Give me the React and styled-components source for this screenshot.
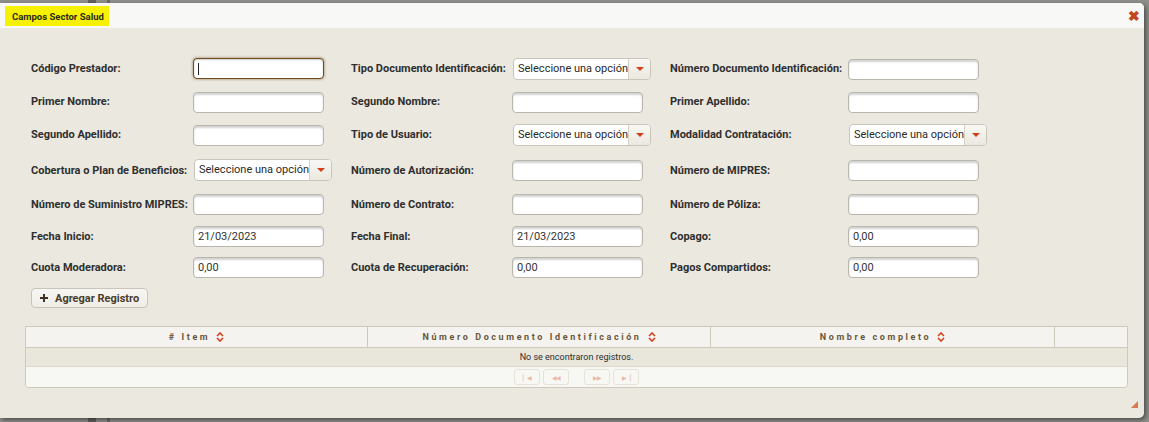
import React from "react";
import styled, { createGlobalStyle } from "styled-components";

const GlobalStyle = createGlobalStyle`
  html, body {
    margin: 0;
    padding: 0;
    background: #8a8a86;
    font-family: Roboto, "Liberation Sans", Arial, sans-serif;
  }
`;

const Backdrop = styled.div`
  width: 1149px;
  height: 422px;
  overflow: hidden;
  background: linear-gradient(90deg, #8d8d89 0, #8d8d89 88px, #5f5f5c 88px, #5f5f5c 96px, #8d8d89 96px, #8d8d89 107px, #6a6a66 107px, #6a6a66 110px, #8d8d89 110px);
  padding-top: 3px;
  box-sizing: border-box;
`;

const Dialog = styled.div`
  width: 1144px;
  height: 415px;
  background: #ebe8df;
  border-radius: 0 5px 5px 0;
  box-shadow: 2px 2px 4px rgba(0, 0, 0, 0.45);
  display: flex;
  flex-direction: column;
  position: relative;
`;

const TitleBar = styled.div`
  height: 25px;
  background: #f8f8f6;
  border-radius: 0 5px 0 0;
  display: flex;
  align-items: center;
  justify-content: space-between;
  padding: 0 4px 0 5px;
`;

const Title = styled.span`
  background: #f5f100;
  color: #2d2a1c;
  font-size: 9.5px;
  font-weight: 700;
  padding: 5px 5px 4px 7px;
  margin-top: 1px;
`;

const Close = styled.span`
  color: #c2461b;
  font-size: 14px;
  font-weight: 900;
  line-height: 1;
  margin-top: 1px;
`;

const Body = styled.div`
  padding: 24px 0 0 31px;
  display: flex;
  flex-direction: column;
`;

const FormGrid = styled.div`
  display: grid;
  grid-template-columns: 162px 158px 161px 158px 178px 1fr;
  grid-template-rows: 33px 33px 33px 38px 30px 34px 28px;
  align-items: center;
`;

const Label = styled.label`
  font-size: 11px;
  font-weight: 700;
  color: #2f2f2f;
`;

const Input = styled.input`
  width: 131px;
  height: 21px;
  box-sizing: border-box;
  border: 1px solid #b9b6ad;
  border-radius: 4px;
  background: #fff;
  box-shadow: inset 0 2px 2px rgba(0, 0, 0, 0.18);
  font-family: Roboto, "Liberation Sans", Arial, sans-serif;
  font-size: 11px;
  color: #333;
  padding: 0 4px;
  outline: none;
`;

const Caret = styled.span`
  display: inline-block;
  width: 1px;
  height: 12px;
  background: #222;
`;

const FocusInput = styled.div`
  width: 131px;
  height: 21px;
  box-sizing: border-box;
  border: 1px solid #6e4c1f;
  border-radius: 4px;
  background: #fff;
  box-shadow: 0 0 3px rgba(110, 76, 31, 0.7), inset 0 1px 2px rgba(0, 0, 0, 0.2);
  display: flex;
  align-items: center;
  padding-left: 4px;
`;

const Select = styled.div`
  width: 138px;
  height: 22px;
  box-sizing: border-box;
  border: 1px solid #c9c5bb;
  border-radius: 4px;
  background: #fff;
  display: flex;
  margin-left: 1px;
  overflow: hidden;
`;

const SelectText = styled.span`
  flex: 1;
  font-size: 11px;
  color: #2a2a2a;
  padding-left: 4px;
  line-height: 19px;
  white-space: nowrap;
`;

const SelectBtn = styled.span`
  width: 21px;
  flex-shrink: 0;
  border-left: 1px solid #d6d2c8;
  background: linear-gradient(#f8f7f3, #ebe8e0);
  display: flex;
  align-items: center;
  justify-content: center;
  &::after {
    content: "";
    border-left: 4px solid transparent;
    border-right: 4px solid transparent;
    border-top: 4px solid #d2401a;
  }
`;

const AddButton = styled.button`
  align-self: flex-start;
  margin-top: 7px;
  height: 20px;
  width: 117px;
  border: 1px solid #c9c5ba;
  border-radius: 4px;
  background: linear-gradient(#f7f6f2, #efede6);
  font-family: Roboto, "Liberation Sans", Arial, sans-serif;
  font-size: 11px;
  font-weight: 700;
  color: #4a3d2a;
  display: flex;
  align-items: center;
  gap: 7px;
  padding: 0 0 0 8px;
`;

const Table = styled.div`
  margin: 18px 0 0 -6px;
  width: 1101px;
  border: 1px solid #cdc9bd;
  border-radius: 0 0 4px 4px;
  overflow: hidden;
`;

const HeadRow = styled.div`
  display: grid;
  grid-template-columns: 342px 343px 344px 1fr;
  height: 20px;
  background: #f4f3f0;
  border-bottom: 1px solid #cdc9bd;
`;

const HeadCell = styled.div`
  border-right: ${(p) => (p.$last ? "none" : "1px solid #cdc9bd")};
  display: flex;
  align-items: center;
  justify-content: center;
  gap: 6px;
  font-size: 9px;
  font-weight: 700;
  letter-spacing: 2.6px;
  color: #6a573a;
`;

const Sort = styled.svg`
  width: 8px;
  height: 10px;
`;

const EmptyRow = styled.div`
  height: 18px;
  background: #e9e6dc;
  border-bottom: 1px solid #dcd8cc;
  font-size: 9px;
  color: #2e2e2e;
  display: flex;
  align-items: center;
  justify-content: center;
`;

const Pager = styled.div`
  height: 20px;
  background: #f7f7f4;
  display: flex;
  align-items: center;
  justify-content: center;
  gap: 3px;
`;

const PageBtn = styled.span`
  width: 26px;
  height: 16px;
  box-sizing: border-box;
  border: 1px solid #e8e3d8;
  border-radius: 3px;
  margin-left: ${(p) => (p.$gap ? "12px" : "0")};
  display: flex;
  align-items: center;
  justify-content: center;
  color: #eab9a6;
  font-size: 6px;
  letter-spacing: -1px;
`;

const Resize = styled.svg`
  position: absolute;
  right: 6px;
  bottom: 10px;
  width: 7px;
  height: 7px;
`;

const SortIcon = () => (
  <Sort viewBox="0 0 8 10">
    <path d="M1 4 L4 1 L7 4" fill="none" stroke="#d2401a" strokeWidth="1.6" />
    <path d="M1 6 L4 9 L7 6" fill="none" stroke="#d2401a" strokeWidth="1.6" />
  </Sort>
);

const Sel = () => (
  <Select>
    <SelectText>Seleccione una opción</SelectText>
    <SelectBtn />
  </Select>
);

const rows = [
  [
    ["Código Prestador:", "focus"],
    ["Tipo Documento Identificación:", "select"],
    ["Número Documento Identificación:", ""],
  ],
  [
    ["Primer Nombre:", ""],
    ["Segundo Nombre:", ""],
    ["Primer Apellido:", ""],
  ],
  [
    ["Segundo Apellido:", ""],
    ["Tipo de Usuario:", "select"],
    ["Modalidad Contratación:", "select"],
  ],
  [
    ["Cobertura o Plan de Beneficios:", "select"],
    ["Número de Autorización:", ""],
    ["Número de MIPRES:", ""],
  ],
  [
    ["Número de Suministro MIPRES:", ""],
    ["Número de Contrato:", ""],
    ["Número de Póliza:", ""],
  ],
  [
    ["Fecha Inicio:", "=21/03/2023"],
    ["Fecha Final:", "=21/03/2023"],
    ["Copago:", "=0,00"],
  ],
  [
    ["Cuota Moderadora:", "=0,00"],
    ["Cuota de Recuperación:", "=0,00"],
    ["Pagos Compartidos:", "=0,00"],
  ],
];

const Field = ({ kind }) => {
  if (kind === "select") return <Sel />;
  if (kind === "focus")
    return (
      <FocusInput>
        <Caret />
      </FocusInput>
    );
  const value = kind.startsWith("=") ? kind.slice(1) : "";
  return <Input defaultValue={value} />;
};

export default function App() {
  return (
    <>
      <GlobalStyle />
      <Backdrop>
        <Dialog>
          <TitleBar>
            <Title>Campos Sector Salud</Title>
            <Close>✖</Close>
          </TitleBar>
          <Body>
            <FormGrid>
              {rows.map((row, i) => (
                <React.Fragment key={i}>
                  {row.map(([label, kind]) => (
                    <React.Fragment key={label}>
                      <Label>{label}</Label>
                      <div>
                        <Field kind={kind} />
                      </div>
                    </React.Fragment>
                  ))}
                </React.Fragment>
              ))}
            </FormGrid>
            <AddButton>
              <svg width="8" height="8" viewBox="0 0 8 8">
                <path d="M4 0 V8 M0 4 H8" stroke="#3d3224" strokeWidth="2" />
              </svg>
              Agregar Registro
            </AddButton>
            <Table>
              <HeadRow>
                <HeadCell>
                  # Item <SortIcon />
                </HeadCell>
                <HeadCell>
                  Número Documento Identificación <SortIcon />
                </HeadCell>
                <HeadCell>
                  Nombre completo <SortIcon />
                </HeadCell>
                <HeadCell $last />
              </HeadRow>
              <EmptyRow>No se encontraron registros.</EmptyRow>
              <Pager>
                <PageBtn>▏◀</PageBtn>
                <PageBtn>◀◀</PageBtn>
                <PageBtn $gap>▶▶</PageBtn>
                <PageBtn>▶▕</PageBtn>
              </Pager>
            </Table>
          </Body>
          <Resize viewBox="0 0 7 7">
            <path d="M7 0 L7 7 L0 7 Z" fill="#d8794f" />
          </Resize>
        </Dialog>
      </Backdrop>
    </>
  );
}
